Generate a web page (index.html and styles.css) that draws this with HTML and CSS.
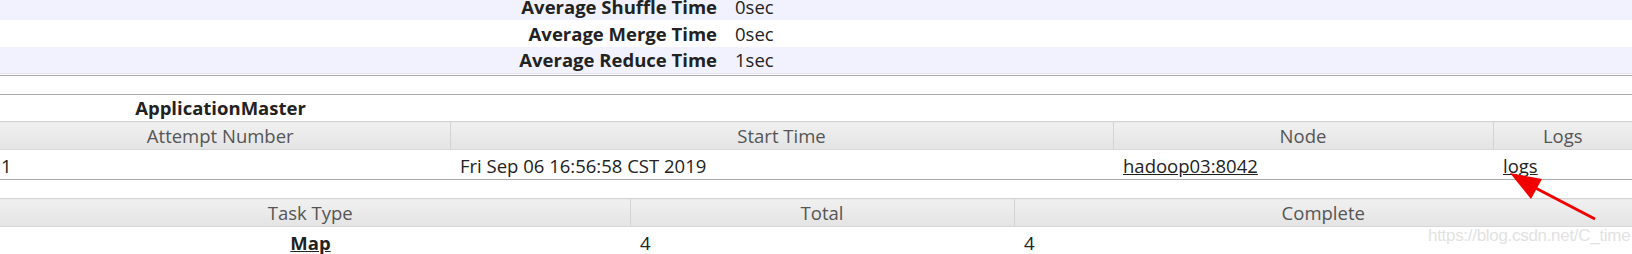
FILE: index.html
```html
<!DOCTYPE html>
<html lang="en">
<head>
    <meta charset="UTF-8">
    <title>Job Overview</title>
    <link rel="stylesheet" href="styles.css">
</head>
<body>
    <div class="page">
        <div class="info-wrap">
            <table class="info">
                <tr class="odd first"><th>Average Shuffle Time</th><td>0sec</td></tr>
                <tr class="even"><th>Average Merge Time</th><td>0sec</td></tr>
                <tr class="odd last"><th>Average Reduce Time</th><td>1sec</td></tr>
            </table>
        </div>

        <table class="grid attempts">
            <colgroup>
                <col style="width: 459px">
                <col style="width: 663px">
                <col style="width: 380px">
                <col>
            </colgroup>
            <tr class="caption"><th>ApplicationMaster</th><th></th><th></th><th></th></tr>
            <tr class="head">
                <th>Attempt Number</th>
                <th>Start Time</th>
                <th>Node</th>
                <th>Logs</th>
            </tr>
            <tr class="row">
                <td>1</td>
                <td>Fri Sep 06 16:56:58 CST 2019</td>
                <td><a href="#">hadoop03:8042</a></td>
                <td><a href="#">logs</a></td>
            </tr>
        </table>

        <table class="grid tasks">
            <colgroup>
                <col style="width: 639px">
                <col style="width: 384px">
                <col>
            </colgroup>
            <tr class="head">
                <th>Task Type</th>
                <th>Total</th>
                <th>Complete</th>
            </tr>
            <tr class="row">
                <th class="type"><a href="#">Map</a></th>
                <td>4</td>
                <td>4</td>
            </tr>
        </table>

        <svg class="arrow" width="120" height="70" viewBox="0 0 120 70">
            <line x1="93" y1="53" x2="24" y2="17" stroke="#f20000" stroke-width="3"/>
            <polygon points="8,7 40,13 29,33" fill="#f20000"/>
        </svg>
        <div class="mark">https://blog.csdn.net/C_time</div>
    </div>
</body>
</html>
```

FILE: styles.css
```css
body {
    margin: 0;
    font-family: "Open Sans", "Noto Sans", sans-serif;
    font-size: 18.5px;
    color: #222;
    background: #fff;
}
.page {
    position: relative;
    overflow: hidden;
    height: 254px;
}
table {
    border-collapse: collapse;
}
th, td {
    line-height: 24px;
}
a {
    color: #222;
    text-decoration: underline;
}

/* job info block */
.info-wrap {
    margin-top: -10px;
    padding-bottom: 1px;
    border-bottom: 1px solid #aaa;
}
.info {
    width: 100%;
    border-bottom: 1px solid #e4e4f2;
}
.info th, .info td {
    height: 27px;
    padding: 0;
}
.info tr.first th, .info tr.first td {
    padding-top: 3px;
}
.info tr.last th, .info tr.last td {
    height: 26px;
}
.info tr.odd {
    background-color: #f2f2fe;
}
.info th {
    width: 727px;
    padding-right: 10px;
    text-align: right;
    font-weight: bold;
    box-sizing: border-box;
}
.info td {
    padding-left: 8px;
}

/* grid tables */
.grid {
    width: calc(100% + 9px);
    margin-left: -9px;
    margin-top: 18px;
    table-layout: fixed;
    border-top: 1px solid #aaa;
    border-bottom: 1px solid #aaa;
}
.grid th, .grid td {
    padding: 0 10px;
    height: 27px;
    white-space: nowrap;
}
.grid td {
    text-align: left;
}
.grid tr.caption th {
    height: 26px;
    font-weight: bold;
    text-align: center;
    color: #222;
}
.grid tr.head th {
    font-weight: normal;
    color: #555;
    text-align: center;
    border: 1px solid #d3d3d3;
    border-bottom-color: #d8d8d8;
    background-image: linear-gradient(#f0f0f0 0%, #eaeaea 50%, #e4e4e4 100%);
}
.grid tr.head th:first-child {
    border-left: none;
}
.grid tr.head th:last-child {
    border-right: none;
}
.grid tr.row td, .grid tr.row th {
    padding-top: 2px;
}
.grid th.type {
    text-align: center;
    font-weight: bold;
}

/* overlay from the screenshot */
.arrow {
    position: absolute;
    left: 1502px;
    top: 166px;
}
.mark {
    position: absolute;
    left: 1428px;
    top: 226px;
    font-family: "Liberation Sans", Arial, sans-serif;
    font-size: 17px;
    color: #e2e2e2;
    letter-spacing: -0.3px;
}
```
